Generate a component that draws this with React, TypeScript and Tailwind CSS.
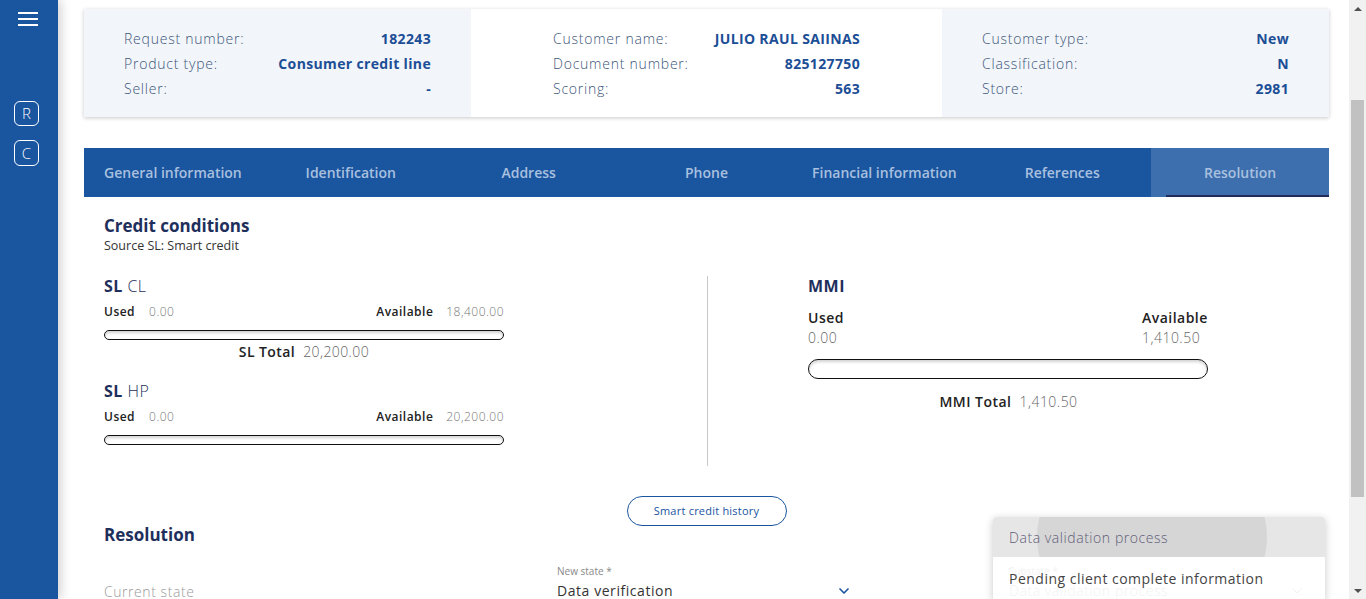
import { ChevronDown } from "lucide-react";

const mont = "font-['Open_Sans',sans-serif]";
const alt = "font-['Open_Sans',sans-serif]";

const headerCols = [
  {
    bg: "bg-[#f2f5fa]",
    rows: [
      ["Request number:", "182243"],
      ["Product type:", "Consumer credit line"],
      ["Seller:", "-"],
    ],
  },
  {
    bg: "bg-white",
    rows: [
      ["Customer name:", "JULIO RAUL SAIINAS"],
      ["Document number:", "825127750"],
      ["Scoring:", "563"],
    ],
  },
  {
    bg: "bg-[#f2f5fa]",
    rows: [
      ["Customer type:", "New"],
      ["Classification:", "N"],
      ["Store:", "2981"],
    ],
  },
];

const tabs = [
  "General information",
  "Identification",
  "Address",
  "Phone",
  "Financial information",
  "References",
  "Resolution",
];

function Bar({ tall = false }: { tall?: boolean }) {
  return (
    <div
      className={`w-[400px] rounded-full border-[1.5px] border-[#111] bg-white shadow-[inset_0_2px_3px_rgba(0,0,0,0.18)] ${
        tall ? "h-[20px]" : "h-[10px]"
      }`}
    ></div>
  );
}

function SlBlock({
  kind,
  available,
  total,
}: {
  kind: string;
  available: string;
  total?: string;
}) {
  return (
    <div className="w-[400px]">
      <div className={`h-[18px] text-[16px] leading-[18px] tracking-[0.03em] text-[#1f2f5c] ${mont}`}>
        <span className="font-bold">SL</span> <span className="font-light">{kind}</span>
      </div>
      <div
        className={`mt-[8px] flex h-[18px] items-center justify-between text-[12px] tracking-[0.04em] ${mont}`}
      >
        <div>
          <span className="font-semibold text-[#222]">Used</span>
          <span className="ml-[14px] font-light text-[#777]">0.00</span>
        </div>
        <div>
          <span className="font-semibold text-[#222]">Available</span>
          <span className="ml-[13px] font-light text-[#777]">{available}</span>
        </div>
      </div>
      <div className="mt-[9px]">
        <Bar />
      </div>
      {total && (
        <div className={`mt-[3px] text-center text-[14px] leading-[18px] tracking-[0.03em] ${mont}`}>
          <span className="font-semibold text-[#222]">SL Total</span>
          <span className="ml-[8px] font-light text-[#666]">{total}</span>
        </div>
      )}
    </div>
  );
}

export default function App() {
  return (
    <div className="flex h-[599px] w-[1366px] overflow-hidden bg-white">
      {/* sidebar */}
      <aside className="relative z-10 flex w-[58px] shrink-0 flex-col bg-[#1a55a0] shadow-[3px_0_10px_rgba(0,0,0,0.18)]">
        <div className="ml-[18px] mt-[12px] flex w-[20px] flex-col gap-[4px]">
          <span className="h-[2px] bg-white"></span>
          <span className="h-[2px] bg-white"></span>
          <span className="h-[2px] bg-white"></span>
        </div>
        <div
          className={`ml-[14px] mt-[75px] flex h-[25px] w-[25px] items-center justify-center rounded-[6px] border-[1.5px] border-white text-[15px] font-light text-white ${mont}`}
        >
          R
        </div>
        <div
          className={`ml-[14px] mt-[14px] flex h-[26px] w-[25px] items-center justify-center rounded-[6px] border-[1.5px] border-white text-[15px] font-light text-white ${mont}`}
        >
          C
        </div>
      </aside>

      {/* main */}
      <main className="relative flex-1 overflow-hidden pl-[26px] pr-[20px] pt-[9px]">
        {/* header card */}
        <div className="grid h-[108px] grid-cols-[387px_471px_387px] shadow-[0_1px_4px_rgba(0,0,0,0.22)]">
          {headerCols.map((col, i) => (
            <div key={i} className={`flex justify-center pt-[17px] ${col.bg}`}>
              <div className="w-[307px]">
                {col.rows.map(([label, value]) => (
                  <div
                    key={label}
                    className={`flex h-[25px] items-center justify-between text-[14px] ${mont}`}
                  >
                    <span className="font-light tracking-[0.055em] text-[#3c5578]">{label}</span>
                    <span className="font-bold tracking-[0.025em] text-[#1c4e96]">{value}</span>
                  </div>
                ))}
              </div>
            </div>
          ))}
        </div>

        {/* tabs */}
        <div className="mt-[31px] grid h-[49px] grid-cols-7 bg-[#1a55a0]">
          {tabs.map((t) => {
            const active = t === "Resolution";
            return (
              <div
                key={t}
                className={`relative flex items-center justify-center text-[14px] font-semibold text-[#a9c0df] ${alt} ${
                  active ? "bg-[#3d6fae]" : ""
                }`}
              >
                {t}
                {active && (
                  <span className="absolute bottom-0 left-[15px] right-0 h-[2px] bg-[#232a5c]"></span>
                )}
              </div>
            );
          })}
        </div>

        {/* credit conditions */}
        <div className="px-[20px] pt-[19px]">
          <h2 className={`text-[17px] leading-[20px] font-bold text-[#1f2f5c] ${alt}`}>
            Credit conditions
          </h2>
          <p className={`mt-[2px] text-[12.5px] leading-[16px] text-[#333] ${alt}`}>
            Source SL: Smart credit
          </p>
        </div>

        <div className="mt-[23px] flex h-[189px]">
          <div className="flex w-[623px] flex-col pl-[20px]">
            <SlBlock kind="CL" available="18,400.00" total="20,200.00" />
            <div className="mt-[21px]">
              <SlBlock kind="HP" available="20,200.00" />
            </div>
          </div>
          <div className="-mt-[1px] w-px bg-[#c8c8c8]"></div>
          <div className={`w-[501px] pl-[100px] tracking-[0.03em] ${mont}`}>
            <div className="h-[18px] text-[16px] leading-[18px] font-bold text-[#1f2f5c]">MMI</div>
            <div className="mt-[13px] flex justify-between text-[14px] leading-[20px]">
              <div>
                <div className="font-semibold text-[#222]">Used</div>
                <div className="font-light text-[#666]">0.00</div>
              </div>
              <div className="w-[67px]">
                <div className="font-semibold text-[#222]">Available</div>
                <div className="font-light text-[#666]">1,410.50</div>
              </div>
            </div>
            <div className="mt-[11px]">
              <Bar tall />
            </div>
            <div className="mt-[13px] text-center text-[14px] leading-[20px]">
              <span className="font-semibold text-[#222]">MMI Total</span>
              <span className="ml-[8px] font-light text-[#666]">1,410.50</span>
            </div>
          </div>
        </div>

        {/* history button */}
        <div className="mt-[30px] flex justify-center">
          <button
            className={`h-[30px] w-[160px] rounded-full border border-[#1a55a0] text-[11px] tracking-[0.02em] text-[#1a55a0] ${alt}`}
          >
            Smart credit history
          </button>
        </div>

        {/* resolution */}
        <div className="px-[20px]">
          <h2 className={`-mt-[1px] text-[17px] leading-[20px] font-bold text-[#1f2f5c] ${alt}`}>
            Resolution
          </h2>
          <div className="mt-[19px] grid grid-cols-[453px_452px_320px]">
            <div
              className={`w-[306px] pt-[17px] text-[14px] font-light tracking-[0.04em] text-[#9a9a9a] ${mont}`}
            >
              Current state
            </div>
            <div className="w-[303px]">
              <div className={`text-[10px] leading-[14px] text-[#888] ${alt}`}>New state *</div>
              <div
                className={`mt-[2px] flex items-center justify-between text-[14px] tracking-[0.04em] text-[#333] ${mont}`}
              >
                <span>Data verification</span>
                <ChevronDown className="mr-[8px] h-[16px] w-[16px] text-[#1a55a0]" strokeWidth={2.5} />
              </div>
            </div>
            <div className="w-[300px]">
              <div className={`text-[10px] leading-[14px] text-[#bbb] ${alt}`}>Substate *</div>
              <div
                className={`mt-[2px] flex items-center justify-between text-[14px] font-light tracking-[0.04em] text-[#bbb] ${mont}`}
              >
                <span>Data validation process</span>
                <ChevronDown className="mr-[4px] h-[16px] w-[16px] text-[#bbb]" strokeWidth={1.5} />
              </div>
            </div>
          </div>
        </div>

        {/* dropdown overlay */}
        <div className="absolute left-[935px] top-[517px] w-[332px] overflow-hidden rounded-[4px] shadow-[0_2px_8px_rgba(0,0,0,0.22)]">
          <div className="relative flex h-[40px] items-center overflow-hidden bg-[#e6e6e6] pl-[16px]">
            <span className="absolute left-[44px] top-[-60px] h-[160px] w-[230px] rounded-full bg-[#d6d6d6]"></span>
            <span className={`relative text-[14px] font-light tracking-[0.04em] text-[#5f5c78] ${mont}`}>
              Data validation process
            </span>
          </div>
          <div className="flex h-[44px] items-start bg-white/80 pl-[16px] pt-[11px]">
            <span className={`text-[14px] tracking-[0.035em] text-[#444] ${mont}`}>
              Pending client complete information
            </span>
          </div>
        </div>
      </main>

      {/* scrollbar */}
      <div className="flex w-[17px] shrink-0 flex-col items-center bg-[#f1f1f1]">
        <div className="flex h-[17px] items-center justify-center">
          <div className="h-0 w-0 border-x-[4px] border-b-[4px] border-x-transparent border-b-[#505050]"></div>
        </div>
        <div className="mt-[83px] h-[397px] w-[13px] bg-[#c1c1c1]"></div>
        <div className="flex-1"></div>
        <div className="flex h-[17px] items-center justify-center">
          <div className="h-0 w-0 border-x-[4px] border-t-[4px] border-x-transparent border-t-[#505050]"></div>
        </div>
      </div>
    </div>
  );
}
